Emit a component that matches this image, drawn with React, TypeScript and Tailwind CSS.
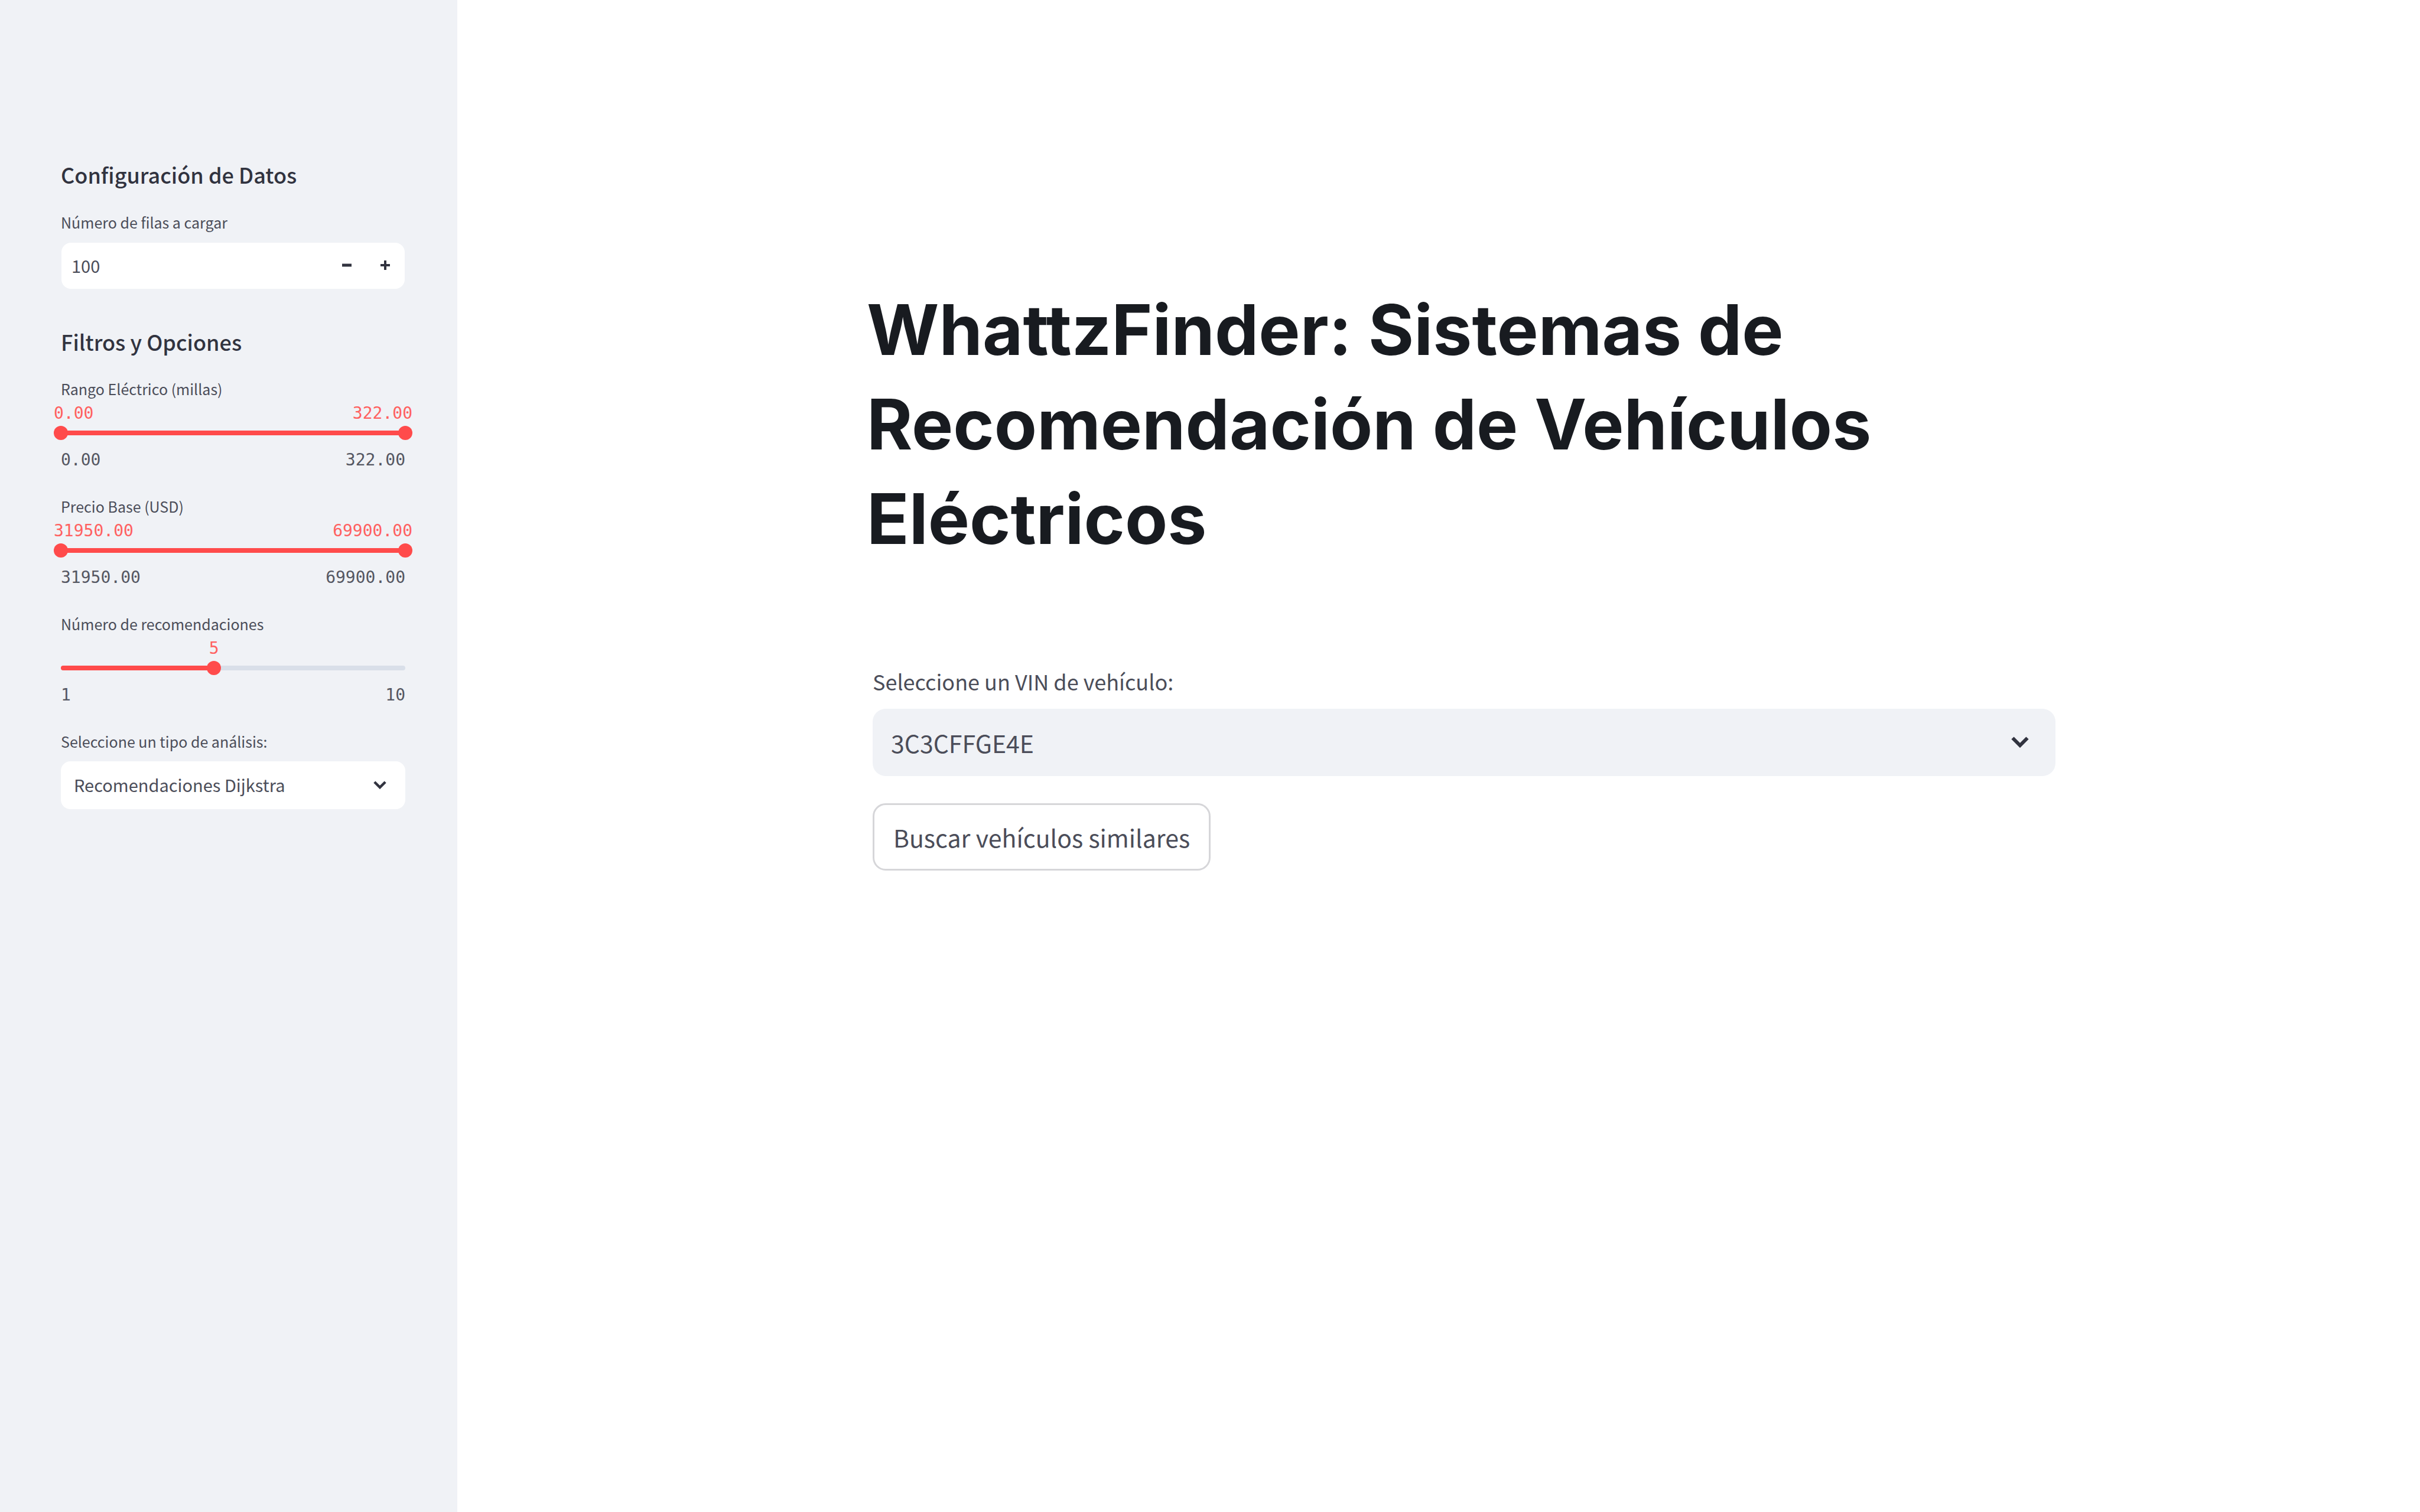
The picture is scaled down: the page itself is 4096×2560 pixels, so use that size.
import { useState } from 'react';

const clearInput =
  'outline-none [&::-webkit-inner-spin-button]:appearance-none [&::-webkit-outer-spin-button]:appearance-none';

const rangeInput =
  'pointer-events-none -mx-3 h-6 appearance-none bg-transparent [grid-area:1/1] [&::-webkit-slider-thumb]:pointer-events-auto [&::-webkit-slider-thumb]:size-6 [&::-webkit-slider-thumb]:appearance-none [&::-webkit-slider-thumb]:rounded-full [&::-webkit-slider-thumb]:bg-[#ff4b4b]';

const labelText = 'block text-[25px] leading-8';

const monoText = "font-['DejaVu_Sans_Mono',monospace] text-[28px] leading-8";

function Chevron({ className }: { className: string }) {
  return (
    <svg viewBox="0 0 30 20" className={className} fill="none" stroke="#31333f" strokeWidth="6" aria-hidden="true">
      <path d="M2.5 2.5 15 15 27.5 2.5" />
    </svg>
  );
}

function Track({ from, to }: { from: number; to: number }) {
  return (
    <div className="h-2 self-center overflow-hidden rounded bg-[#d9dfe9] [grid-area:1/1]">
      <div className="h-full bg-[#ff4b4b]" style={{ marginLeft: `${from}%`, width: `${to - from}%` }} />
    </div>
  );
}

function Bounds({ min, max }: { min: string; max: string }) {
  return (
    <div className={`mt-[18px] flex justify-between text-[#555762] ${monoText}`}>
      <span>{min}</span>
      <span>{max}</span>
    </div>
  );
}

function RangeSlider({ label, min, max }: { label: string; min: number; max: number }) {
  const [low, setLow] = useState(min);
  const [high, setHigh] = useState(max);
  const pct = (v: number) => ((v - min) / (max - min)) * 100;
  return (
    <fieldset className="min-w-0">
      <legend className={labelText}>{label}</legend>
      <div className={`-mx-3 mt-[10px] flex justify-between text-[#ff6060] ${monoText}`}>
        <output>{low.toFixed(2)}</output>
        <output>{high.toFixed(2)}</output>
      </div>
      <div className="mt-[5px] grid">
        <Track from={pct(low)} to={pct(high)} />
        <input
          type="range"
          aria-label={`${label}, mínimo`}
          className={rangeInput}
          min={min}
          max={max}
          value={low}
          onChange={(e) => setLow(Math.min(Number(e.target.value), high))}
        />
        <input
          type="range"
          aria-label={`${label}, máximo`}
          className={rangeInput}
          min={min}
          max={max}
          value={high}
          onChange={(e) => setHigh(Math.max(Number(e.target.value), low))}
        />
      </div>
      <Bounds min={min.toFixed(2)} max={max.toFixed(2)} />
    </fieldset>
  );
}

function CountSlider() {
  const [count, setCount] = useState(5);
  const pct = ((count - 1) / 9) * 100;
  return (
    <div>
      <label htmlFor="count" className={labelText}>
        Número de recomendaciones
      </label>
      <div className={`relative mt-[10px] h-8 text-[#ff6060] ${monoText}`}>
        <output htmlFor="count" className="absolute -translate-x-1/2" style={{ left: `${pct}%` }}>
          {count}
        </output>
      </div>
      <div className="mt-[5px] grid">
        <Track from={0} to={pct} />
        <input
          id="count"
          type="range"
          className={rangeInput}
          min={1}
          max={10}
          value={count}
          onChange={(e) => setCount(Number(e.target.value))}
        />
      </div>
      <Bounds min="1" max="10" />
    </div>
  );
}

export default function App() {
  const [rows, setRows] = useState(100);
  return (
    <div className="flex min-h-screen bg-white font-['Noto_Sans_CJK_SC',sans-serif] text-[#4b4d59]">
      <aside className="w-[774px] shrink-0 bg-[#f0f2f6] pt-[273px] pr-[88px] pl-[103px]">
        <h2 className="text-[36px] leading-[44px] font-medium text-[#31333f]">Configuración de Datos</h2>
        <label htmlFor="rows" className={`mt-[43px] ${labelText}`}>
          Número de filas a cargar
        </label>
        <div className="mx-px mt-[19px] flex h-[78px] items-center rounded-2xl bg-white pr-2 pb-0.5 pl-[17px]">
          <input
            id="rows"
            type="number"
            className={`min-w-0 flex-1 text-[29px] leading-10 ${clearInput}`}
            value={rows}
            onChange={(e) => setRows(Number(e.target.value))}
          />
          <button
            type="button"
            aria-label="Restar"
            className="flex h-full w-20 items-center justify-center"
            onClick={() => setRows(rows - 1)}
          >
            <svg viewBox="0 0 16 16" className="size-4" stroke="#31333f" strokeWidth="5" aria-hidden="true">
              <path d="M0 8h16" />
            </svg>
          </button>
          <button
            type="button"
            aria-label="Sumar"
            className="flex h-full w-[50px] items-center justify-center"
            onClick={() => setRows(rows + 1)}
          >
            <svg viewBox="0 0 16 16" className="size-4" stroke="#31333f" strokeWidth="4" aria-hidden="true">
              <path d="M0 8h16M8 0v16" />
            </svg>
          </button>
        </div>

        <h2 className="mt-[67px] text-[36px] leading-[44px] font-medium text-[#31333f]">Filtros y Opciones</h2>
        <div className="mt-[42px] flex flex-col gap-[46px]">
          <RangeSlider label="Rango Eléctrico (millas)" min={0} max={322} />
          <RangeSlider label="Precio Base (USD)" min={31950} max={69900} />
          <CountSlider />
          <div>
            <label htmlFor="analysis" className={labelText}>
              Seleccione un tipo de análisis:
            </label>
            <div className="relative mt-[18px]">
              <select
                id="analysis"
                className="block h-[81px] w-full appearance-none rounded-2xl bg-white pr-16 pb-1 pl-[22px] text-[29px] leading-10 outline-none"
              >
                <option>Recomendaciones Dijkstra</option>
              </select>
              <Chevron className="pointer-events-none absolute top-[33px] right-8 h-[15px] w-[22px]" />
            </div>
          </div>
        </div>
      </aside>

      <main className="min-w-0 flex-1 pt-[478px] pr-[617px] pl-[693px]">
        <h1 className="font-['Inter',sans-serif] text-[118px] leading-[160px] font-bold text-[#181b20]">
          WhattzFinder: Sistemas de Recomendación de Vehículos Eléctricos
        </h1>
        <div className="mt-[173px] pl-[10px]">
          <label htmlFor="vin" className="block text-[36px] leading-[44px]">
            Seleccione un VIN de vehículo:
          </label>
          <div className="relative mt-[25px]">
            <select
              id="vin"
              className="block h-[114px] w-full appearance-none rounded-[22px] bg-[#f0f2f6] pr-24 pl-[31px] text-[41px] leading-[56px] outline-none"
            >
              <option>3C3CFFGE4E</option>
            </select>
            <Chevron className="pointer-events-none absolute top-[47px] right-[45px] h-5 w-[30px]" />
          </div>
          <button
            type="button"
            className="mt-[46px] flex h-[114px] items-center rounded-[22px] border-3 border-[#d6d6d9] bg-white px-8 text-[41px] leading-[56px]"
          >
            Buscar vehículos similares
          </button>
        </div>
      </main>
    </div>
  );
}
